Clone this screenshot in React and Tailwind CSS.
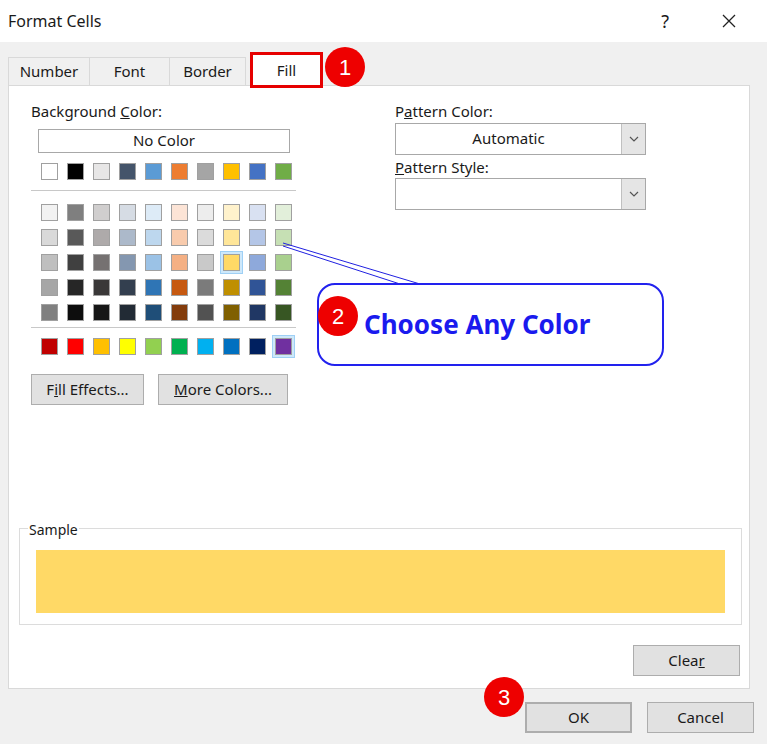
import React from "react";

const theme = ["#FFFFFF", "#000000", "#E7E6E6", "#44546A", "#5B9BD5", "#ED7D31", "#A5A5A5", "#FFC000", "#4472C4", "#70AD47"];
const tints = [
  ["#F2F2F2", "#7F7F7F", "#D0CECE", "#D6DCE4", "#DDEBF7", "#FCE4D6", "#EDEDED", "#FFF2CC", "#D9E1F2", "#E2EFDA"],
  ["#D9D9D9", "#595959", "#AEAAAA", "#ACB9CA", "#BDD7EE", "#F8CBAD", "#DBDBDB", "#FFE699", "#B4C6E7", "#C6E0B4"],
  ["#BFBFBF", "#404040", "#757171", "#8497B0", "#9BC2E6", "#F4B084", "#C9C9C9", "#FFD966", "#8EA9DB", "#A9D08E"],
  ["#A6A6A6", "#262626", "#3A3838", "#333F4F", "#2F75B5", "#C65911", "#7B7B7B", "#BF8F00", "#305496", "#548235"],
  ["#808080", "#0D0D0D", "#161616", "#222B35", "#1F4E78", "#833C0C", "#525252", "#806000", "#203764", "#375623"],
];
const standard = ["#C00000", "#FF0000", "#FFC000", "#FFFF00", "#92D050", "#00B050", "#00B0F0", "#0070C0", "#002060", "#7030A0"];

function Swatch({ color, selected }) {
  return (
    <div className={"w-[26px] h-[25px] flex items-center justify-center " + (selected ? "" : "")}>
      <div className={"w-[23px] h-[23px] flex items-center justify-center " + (selected ? "bg-[#cde8fb] border border-[#9fd0f5]" : "")}>
        <div className="w-[17px] h-[17px] border border-[#a0a0a0]" style={{ background: color }} />
      </div>
    </div>
  );
}

function Row({ colors, sel = -1 }) {
  return (
    <div className="flex">
      {colors.map((c, i) => (
        <Swatch key={i} color={c} selected={i === sel} />
      ))}
    </div>
  );
}

function Badge({ n, className }) {
  return (
    <div className={"absolute w-[40px] h-[40px] rounded-full bg-[#ee0000] text-white flex items-center justify-center text-[22px] font-[Liberation_Sans,sans-serif] " + className}>
      {n}
    </div>
  );
}

function Btn({ children, className = "" }) {
  return (
    <div className={"h-[31px] bg-[#e1e1e1] border border-[#adadad] flex items-center justify-center text-[15px] text-[#1a1a1a] " + className}>
      {children}
    </div>
  );
}

function Select({ value }) {
  return (
    <div className="w-[251px] h-[32px] flex border border-[#a8a8a8] bg-white">
      <div className="flex-1 flex items-center justify-center text-[15px] text-[#1a1a1a]">{value}</div>
      <div className="w-[24px] bg-[#e5e5e5] border-l border-[#c0c0c0] flex items-center justify-center">
        <svg width="10" height="6" viewBox="0 0 10 6"><path d="M1 1l4 4 4-4" fill="none" stroke="#555" strokeWidth="1.2" /></svg>
      </div>
    </div>
  );
}

export default function App() {
  return (
    <div className="w-[767px] h-[744px] bg-[#f0f0f0] relative overflow-hidden font-['Noto_Sans',sans-serif] text-[#1a1a1a]">
      {/* title bar */}
      <div className="h-[42px] bg-white flex items-center px-[8px]">
        <span className="text-[16px]">Format Cells</span>
        <div className="flex-1" />
        <span className="text-[18px] mr-[52px]">?</span>
        <svg width="16" height="16" viewBox="0 0 16 16" className="mr-[22px]"><path d="M2 2l12 12M14 2L2 14" stroke="#222" strokeWidth="1.3" /></svg>
      </div>

      {/* tabs */}
      <div className="flex items-end pl-[8px] pt-[14px] h-[43px] text-[15px]">
        <div className="w-[82px] h-[28px] border border-[#d9d9d9] border-b-0 bg-[#f0f0f0] flex items-center justify-center">Number</div>
        <div className="w-[80px] h-[28px] border border-[#d9d9d9] border-b-0 border-l-0 flex items-center justify-center">Font</div>
        <div className="w-[76px] h-[28px] border border-[#d9d9d9] border-b-0 border-l-0 flex items-center justify-center">Border</div>
        <div className="ml-[4px] w-[73px] h-[36px] bg-white border-[3px] border-[#e60000] flex items-center justify-center mb-[-3px] relative z-10">Fill</div>
      </div>

      {/* panel */}
      <div className="mx-[8px] w-[742px] h-[604px] bg-white border border-[#d9d9d9] relative">
        <div className="flex">
          <div className="pl-[22px] pt-[14px] w-[380px]">
            <div className="text-[15px]">Background <u>C</u>olor:</div>
            <div className="ml-[7px] mt-[6px] w-[252px] h-[24px] border border-[#a8a8a8] flex items-center justify-center text-[15px]">No Color</div>
            <div className="ml-[5px] mt-[6px]"><Row colors={theme} /></div>
            <div className="w-[265px] h-px bg-[#c8c8c8] mt-[6px] mb-[9px]" />
            <div className="ml-[5px]">
              {tints.map((r, i) => (
                <Row key={i} colors={r} sel={i === 2 ? 7 : -1} />
              ))}
            </div>
            <div className="w-[265px] h-px bg-[#c8c8c8] mt-[2px] mb-[6px]" />
            <div className="ml-[5px]"><Row colors={standard} sel={9} /></div>
            <div className="flex gap-[14px] mt-[15px]">
              <Btn className="w-[113px]">F<u>i</u>ll Effects...</Btn>
              <Btn className="w-[130px]"><u>M</u>ore Colors...</Btn>
            </div>
          </div>
          <div className="pt-[14px] pl-[6px]">
            <div className="text-[15px]">P<u>a</u>ttern Color:</div>
            <Select value="Automatic" />
            <div className="text-[15px] mt-[1px]"><u>P</u>attern Style:</div>
            <Select value="" />
          </div>
        </div>

        {/* sample */}
        <div className="absolute left-[10px] top-[442px] w-[723px] h-[97px] border border-[#dcdcdc] px-[16px] pt-[21px]">
          <span className="absolute left-[8px] top-[-10px] bg-white text-[14px] px-[1px]">Sample</span>
          <div className="h-[63px] bg-[#FFD966]" />
        </div>
        <Btn className="absolute right-[9px] top-[559px] w-[107px]">Clea<u>r</u></Btn>
      </div>

      {/* footer buttons */}
      <div className="flex justify-end gap-[15px] pr-[13px] mt-[13px]">
        <Btn className="w-[107px] border-2 border-[#0078d7]">OK</Btn>
        <Btn className="w-[107px]">Cancel</Btn>
      </div>

      {/* callouts */}
      <svg className="absolute left-0 top-0 pointer-events-none" width="767" height="744">
        <path d="M283 243 L420 284 M283 246 L400 284" stroke="#2020e0" strokeWidth="1" fill="none" />
      </svg>
      <div className="absolute left-[317px] top-[283px] w-[347px] h-[83px] border-2 border-[#2222ee] rounded-[18px] flex items-center pl-[45px] text-[#1a1aee] text-[26px] font-bold font-['Liberation_Sans',sans-serif]">
        Choose Any Color
      </div>
      <Badge n="1" className="left-[325px] top-[47px]" />
      <Badge n="2" className="left-[318px] top-[296px]" />
      <Badge n="3" className="left-[484px] top-[677px]" />
    </div>
  );
}
